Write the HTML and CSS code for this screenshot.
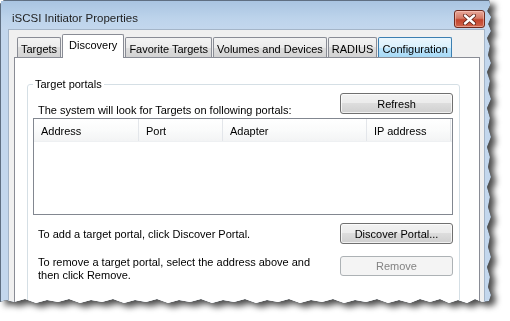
FILE: index.html
```html
<!DOCTYPE html>
<html lang="en">
  <head>
    <meta charset="UTF-8" />
    <meta name="viewport" content="width=device-width, initial-scale=1.0" />
    <title>iSCSI Initiator Properties</title>
    <link rel="stylesheet" href="styles.css">
  </head>

  <body>
    <div class="shot">
      <div class="window">
        <div class="titlebar">
          <span class="title">iSCSI Initiator Properties</span>
          <span class="close">
            <svg width="13" height="11" viewBox="0 0 13 11">
              <path d="M2 1.5 L11 9.5 M11 1.5 L2 9.5" stroke="#5a1e14" stroke-width="4" stroke-linecap="round" />
              <path d="M2 1.5 L11 9.5 M11 1.5 L2 9.5" stroke="#ffffff" stroke-width="2.4" stroke-linecap="round" />
            </svg>
          </span>
        </div>

        <div class="client">
          <div class="tabs">
            <span class="tab">Targets</span>
            <span class="tab selected">Discovery</span>
            <span class="tab">Favorite Targets</span>
            <span class="tab">Volumes and Devices</span>
            <span class="tab">RADIUS</span>
            <span class="tab hover">Configuration</span>
          </div>

          <div class="panel">
            <fieldset class="group">
              <legend>Target portals</legend>

              <div class="row row-top">
                <span class="label">The system will look for Targets on following portals:</span>
                <button class="btn">Refresh</button>
              </div>

              <div class="listview">
                <div class="lv-header">
                  <span class="col col-address">Address</span>
                  <span class="col col-port">Port</span>
                  <span class="col col-adapter">Adapter</span>
                  <span class="col col-ip">IP address</span>
                </div>
              </div>

              <div class="row row-add">
                <span class="label">To add a target portal, click Discover Portal.</span>
                <button class="btn">Discover Portal...</button>
              </div>

              <div class="row row-remove">
                <span class="label">To remove a target portal, select the address above and<br>then click Remove.</span>
                <button class="btn" disabled>Remove</button>
              </div>
            </fieldset>
          </div>
        </div>
      </div>
    </div>
  </body>
</html>
```

FILE: styles.css
```css
body,
html {
  margin: 0;
  padding: 0;
  background-color: white;
  font-family: "Segoe UI", "Liberation Sans", Arial, sans-serif;
  font-size: 11px;
  color: black;
}

* {
  box-sizing: border-box;
}

.shot {
  width: 510px;
  height: 321px;
  overflow: hidden;
  filter: drop-shadow(0 0 0.6px rgba(0, 0, 0, 0.85)) drop-shadow(5px 4px 3px rgba(0, 0, 0, 0.7));
}

/* window with a torn right and bottom edge */
.window {
  width: 494px;
  height: 330px;
  display: flex;
  flex-direction: column;
  background: #c3d7ed;
  border-left: 1px solid #5f6f82;
  border-top: 1px solid #5f6f82;
  border-top-left-radius: 6px;
  clip-path: polygon(0 0, 489px 0, 490px 5px, 487px 11px, 491px 17px, 488px 24px, 491px 31px, 487px 38px,
    490px 46px, 488px 55px, 491px 63px, 487px 72px, 490px 81px, 488px 90px, 491px 99px, 487px 108px,
    490px 118px, 488px 127px, 491px 137px, 487px 147px, 490px 157px, 488px 167px, 491px 177px,
    487px 187px, 490px 197px, 488px 207px, 491px 217px, 487px 227px, 490px 237px, 488px 247px,
    491px 257px, 487px 267px, 490px 277px, 488px 287px, 491px 295px, 489px 301px,
    482px 302px, 475px 299px, 467px 303px, 458px 300px, 449px 303px, 440px 299px, 430px 302px,
    420px 299px, 410px 303px, 399px 300px, 388px 303px, 377px 299px, 366px 302px, 355px 300px,
    344px 303px, 333px 299px, 322px 302px, 311px 300px, 300px 303px, 289px 299px, 278px 302px,
    267px 300px, 256px 303px, 245px 299px, 234px 302px, 223px 300px, 212px 303px, 201px 299px,
    190px 302px, 179px 300px, 168px 303px, 157px 299px, 146px 302px, 135px 300px, 124px 303px,
    113px 299px, 102px 302px, 91px 300px, 80px 303px, 69px 299px, 58px 302px, 47px 300px,
    36px 303px, 25px 299px, 14px 302px, 6px 300px, 0 302px);
}

.titlebar {
  height: 28px;
  flex-shrink: 0;
  display: flex;
  align-items: flex-start;
  justify-content: space-between;
  background: linear-gradient(#a9c4e1, #bcd3eb 60%, #c3d7ed);
}

.title {
  margin: 9px 0 0 11px;
  font-size: 11.5px;
  line-height: 16px;
  color: #1e1e1e;
}

.close {
  width: 31px;
  height: 18px;
  margin: 9px 9px 0 0;
  border: 1px solid #6e2a1f;
  border-radius: 3px;
  background: linear-gradient(#e9a99b, #d47a66 45%, #c2442d 55%, #d0654c);
  box-shadow: inset 0 0 0 1px rgba(255, 210, 200, 0.5);
  display: flex;
  align-items: center;
  justify-content: center;
}

.client {
  flex: 1;
  display: flex;
  flex-direction: column;
  margin: 0 9px 0 7px;
  padding: 5px 4px 0 5px;
  border: 1px solid #a4b5c8;
  border-bottom: none;
  background: #f0f0f0;
}

.tabs {
  height: 22px;
  display: flex;
  align-items: flex-end;
  padding-left: 3px;
  position: relative;
  z-index: 1;
}

.tab {
  height: 20px;
  padding: 3px 3px 0 3px;
  margin-right: 1px;
  line-height: 16px;
  border: 1px solid #898c95;
  border-bottom: none;
  border-radius: 2px 2px 0 0;
  background: linear-gradient(#f3f3f3, #ebebeb 50%, #dedede 50%, #d3d3d3);
  white-space: nowrap;
}

.tab.selected {
  height: 24px;
  margin-bottom: -1px;
  padding-top: 2px;
  padding-left: 6px;
  padding-right: 6px;
  background: white;
}

.tab.hover {
  border-color: #3c7fb1;
  background: linear-gradient(#eaf6fd, #d9f0fc 50%, #bee6fd 50%, #a7d9f5);
}

.panel {
  flex: 1;
  display: flex;
  flex-direction: column;
  padding: 18px 19px 0 12px;
  border: 1px solid #898c95;
  background: white;
}

.group {
  flex: 1;
  min-width: 0;
  margin: 0;
  padding: 0 6px 0 5px;
  border: 1px solid #d5dfe5;
  border-radius: 3px;
}

.group legend {
  padding: 0 2px;
  line-height: 16px;
}

.row {
  display: flex;
  justify-content: space-between;
}

.label {
  padding-left: 5px;
  line-height: 16px;
  white-space: nowrap;
}

.row-top {
  height: 25px;
  margin-top: 1px;
}

.row-top .label {
  align-self: flex-end;
}

.row-add {
  height: 21px;
  margin-top: 8px;
  align-items: center;
}

.row-remove {
  margin-top: 12px;
  align-items: flex-start;
}

.row-remove .label {
  line-height: 13px;
}

.btn {
  width: 113px;
  height: 21px;
  padding: 0;
  font-family: inherit;
  font-size: 11px;
  color: black;
  border: 1px solid #707070;
  border-radius: 3px;
  background: linear-gradient(#f2f2f2, #ebebeb 50%, #dddddd 50%, #cfcfcf);
  box-shadow: inset 0 0 0 1px rgba(255, 255, 255, 0.7);
}

.btn:disabled {
  height: 20px;
  color: #838383;
  border-color: #adb2b5;
  background: #f4f4f4;
  box-shadow: none;
}

.listview {
  height: 97px;
  border: 1px solid #828790;
  background: white;
}

.lv-header {
  height: 23px;
  display: flex;
  background: linear-gradient(#ffffff, #fafbfb 50%, #f3f4f5);
  border-bottom: 1px solid #eef0f2;
}

.col {
  padding: 4px 0 0 7px;
  line-height: 16px;
  border-right: 1px solid #e3e6ea;
}

.col-address {
  width: 105px;
}

.col-port {
  width: 84px;
}

.col-adapter {
  width: 144px;
}

.col-ip {
  width: 84px;
}
```
